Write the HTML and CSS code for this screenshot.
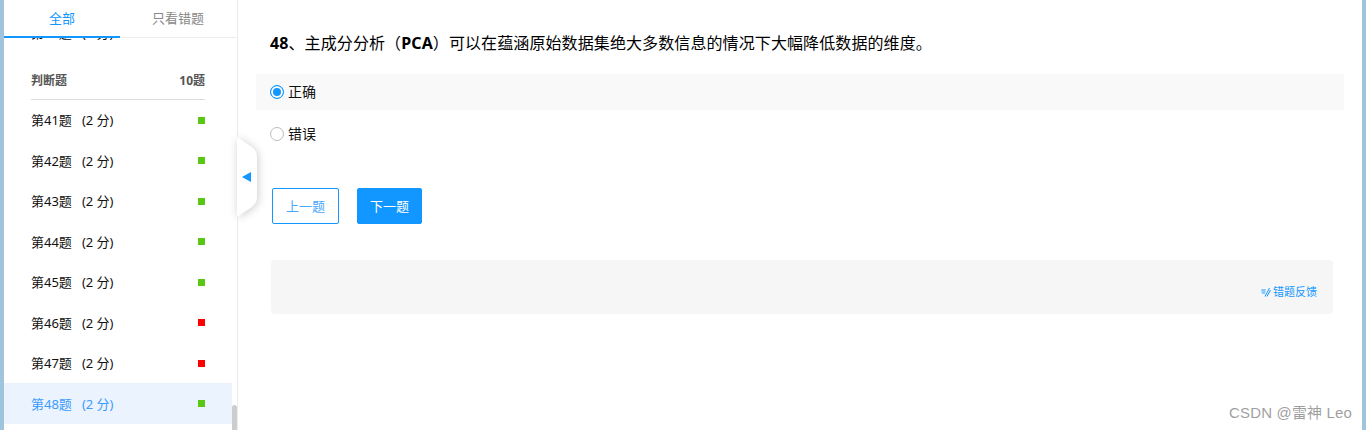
FILE: index.html
```html
<!DOCTYPE html>
<html>
<head>
  <meta charset="utf-8">
  <link rel="stylesheet" href="styles.css">
</head>
<body>
  <div class="page">
    <aside class="sidebar">
      <div class="tabs">
        <div class="tab active">全部</div>
        <div class="tab">只看错题</div>
      </div>
      <div class="list">
        <div class="row clipped"><span>第40题</span><span class="score">(2 分)</span></div>
        <div class="section-head"><span>判断题</span><span>10题</span></div>
        <div class="row"><span>第41题</span><span class="score">(2 分)</span><i class="mark ok"></i></div>
        <div class="row"><span>第42题</span><span class="score">(2 分)</span><i class="mark ok"></i></div>
        <div class="row"><span>第43题</span><span class="score">(2 分)</span><i class="mark ok"></i></div>
        <div class="row"><span>第44题</span><span class="score">(2 分)</span><i class="mark ok"></i></div>
        <div class="row"><span>第45题</span><span class="score">(2 分)</span><i class="mark ok"></i></div>
        <div class="row"><span>第46题</span><span class="score">(2 分)</span><i class="mark bad"></i></div>
        <div class="row"><span>第47题</span><span class="score">(2 分)</span><i class="mark bad"></i></div>
        <div class="row current"><span>第48题</span><span class="score">(2 分)</span><i class="mark ok"></i></div>
        <div class="scroll-thumb"></div>
      </div>
      <div class="collapse">
        <svg class="collapse-shape" width="30" height="90" viewBox="0 0 30 90">
          <path d="M0 5 L15 15 Q20 19 20 25 L20 65 Q20 71 15 75 L0 85 Z" fill="#fff"/>
        </svg>
        <span class="collapse-arrow"></span>
      </div>
    </aside>

    <main class="content">
      <h1 class="question"><b>48</b>、主成分分析（<b>PCA</b>）可以在蕴涵原始数据集绝大多数信息的情况下大幅降低数据的维度。</h1>
      <div class="option selected"><span class="radio"></span>正确</div>
      <div class="option"><span class="radio"></span>错误</div>
      <div class="actions">
        <button class="btn btn-outline">上一题</button>
        <button class="btn btn-primary">下一题</button>
      </div>
      <div class="feedback">
        <a class="feedback-link">
          <svg width="10" height="10" viewBox="0 0 10 10">
            <path d="M0 2 H5 L4 7 H1 Z" fill="#8cc8fb"/>
            <path d="M4 9.5 L8.5 1 M6 9.5 L9.5 3" stroke="#1296ff" stroke-width="1" fill="none"/>
          </svg>
          错题反馈
        </a>
      </div>
    </main>
  </div>
  <div class="watermark">CSDN @雷神 Leo</div>
</body>
</html>
```

FILE: styles.css
```css
html, body {
  margin: 0;
  height: 430px;
  overflow: hidden;
}

body {
  font-family: "Noto Sans", "Noto Sans CJK SC", sans-serif;
  color: #111;
  background: #fff;
}

.page {
  display: flex;
  height: 430px;
  box-sizing: border-box;
  border-left: 4px solid #a0c4dc;
  border-right: 4px solid #a0c4dc;
}

/* Sidebar */
.sidebar {
  position: relative;
  flex: 0 0 234px;
  box-sizing: border-box;
  border-right: 1px solid #ececec;
}

.tabs {
  display: flex;
  height: 38px;
  box-sizing: border-box;
  border-bottom: 1px solid #ececec;
  position: relative;
  z-index: 1;
  background: #fff;
}

.tab {
  flex: 0 0 116px;
  height: 38px;
  box-sizing: border-box;
  text-align: center;
  font-size: 13px;
  line-height: 36px;
  color: #888;
}

.tab.active {
  color: #1296ff;
  border-bottom: 2px solid #1296ff;
}

.list {
  position: relative;
  height: 392px;
  overflow: hidden;
}

.row {
  display: flex;
  align-items: center;
  height: 40.5px;
  width: 228px;
  box-sizing: border-box;
  padding: 0 27px;
  font-size: 13px;
}

.row.clipped {
  margin-top: -26px;
}

.score {
  margin-left: 10px;
}

.mark {
  width: 7px;
  height: 7px;
  margin: 1px 0 0 auto;
}

.mark.ok {
  background: #5ac715;
}

.mark.bad {
  background: #ff0000;
}

.row.current {
  background: #ebf3fe;
  color: #3d9bff;
}

.section-head {
  display: flex;
  justify-content: space-between;
  align-items: center;
  box-sizing: border-box;
  height: 37px;
  margin: 10px 32px 0 27px;
  padding-bottom: 2px;
  font-size: 12px;
  font-weight: 700;
  color: #555;
  border-bottom: 1px solid #ddd;
}

.scroll-thumb {
  position: absolute;
  right: 0;
  top: 367px;
  width: 5px;
  height: 30px;
  border-radius: 3px 3px 0 0;
  background: #cdcdcd;
}

.collapse {
  position: absolute;
  left: 233px;
  top: 132px;
  width: 30px;
  height: 90px;
}

.collapse-shape {
  display: block;
  filter: drop-shadow(1px 1px 4px rgba(0, 0, 0, 0.2));
}

.collapse-arrow {
  position: absolute;
  left: 5px;
  top: 40px;
  border-style: solid;
  border-width: 5px 9px 5px 0;
  border-color: transparent #1296ff transparent transparent;
}

/* Question area */
.content {
  flex: 1;
  min-width: 0;
  padding: 33px 18px 0;
}

.question {
  margin: 0 0 20px 14px;
  font-size: 16px;
  line-height: 21px;
  font-weight: 400;
  letter-spacing: 0.1px;
  color: #000;
}

.question b {
  font-weight: 700;
}

.option {
  display: flex;
  align-items: center;
  box-sizing: border-box;
  height: 36px;
  margin-bottom: 6px;
  padding: 0 0 2px 14px;
  font-size: 14px;
}

.option.selected {
  background: #f9f9f9;
}

.radio {
  width: 14px;
  height: 14px;
  box-sizing: border-box;
  margin: 2px 4px 0 0;
  border: 1px solid #bbb;
  border-radius: 50%;
  background: #fff;
}

.selected .radio {
  border-color: #1296ff;
  background: #1296ff;
  box-shadow: inset 0 0 0 2px #fff;
}

.actions {
  display: flex;
  gap: 18px;
  margin: 36px 0 36px 16px;
}

.btn {
  height: 36px;
  padding: 0 0 2px;
  border: 1px solid #1296ff;
  border-radius: 2px;
  font-family: inherit;
  font-size: 13px;
}

.btn-outline {
  width: 67px;
  background: #fff;
  color: #4aa8fb;
}

.btn-primary {
  width: 65px;
  background: #1296ff;
  color: #fff;
}

.feedback {
  display: flex;
  justify-content: flex-end;
  align-items: flex-end;
  box-sizing: border-box;
  height: 54px;
  margin: 0 0 0 15px;
  padding: 0 16px 15px 0;
  width: 1062px;
  background: #f6f6f6;
  border-radius: 4px;
}

.feedback-link {
  display: flex;
  align-items: center;
  gap: 2px;
  font-size: 11px;
  line-height: 14px;
  color: #1296ff;
}

.watermark {
  position: absolute;
  right: 14px;
  top: 403px;
  font-family: "Liberation Sans", "Noto Sans CJK SC", sans-serif;
  font-size: 15px;
  line-height: 20px;
  letter-spacing: 0.15px;
  color: rgba(120, 120, 120, 0.72);
}
```
